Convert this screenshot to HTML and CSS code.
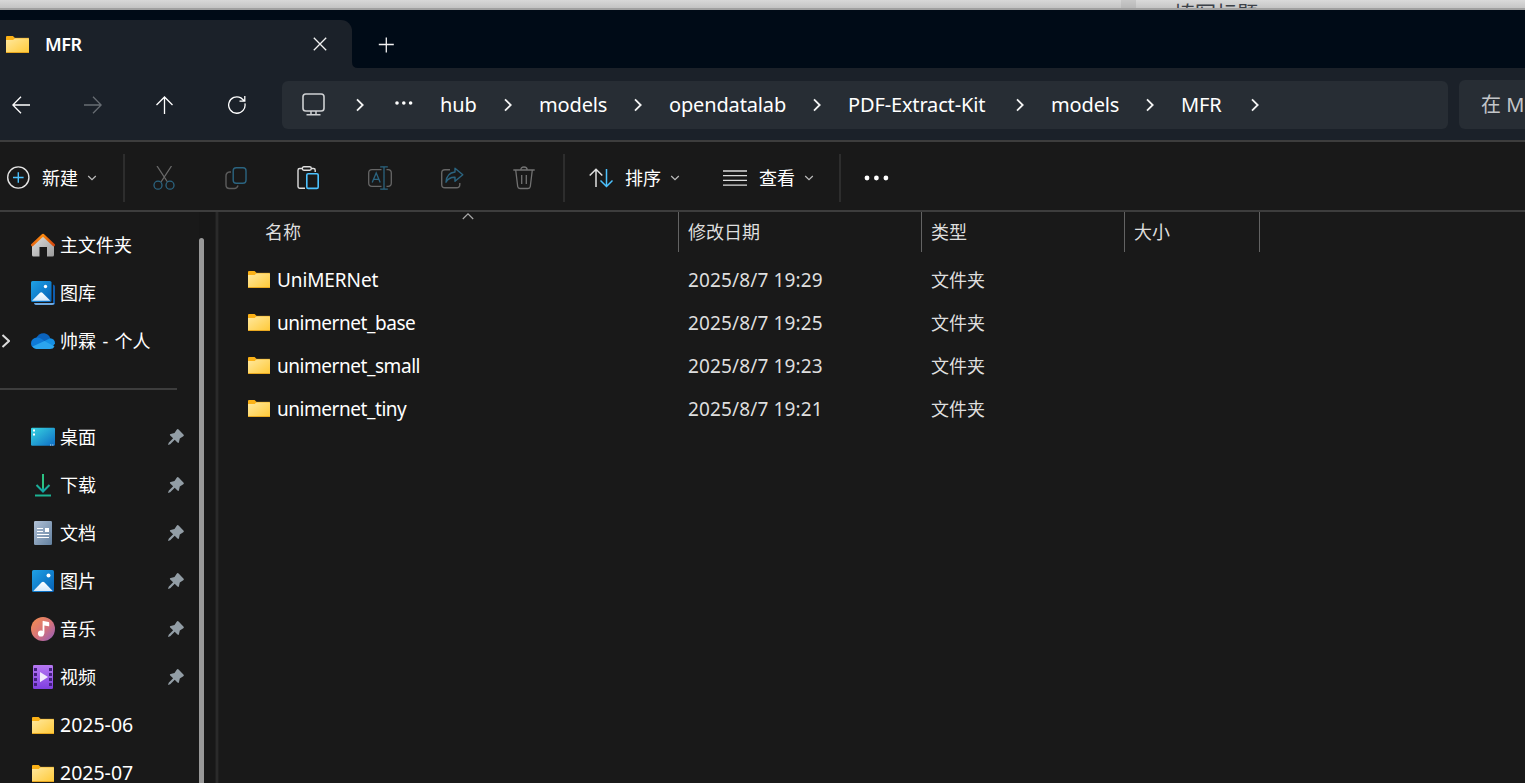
FILE: index.html
```html
<!DOCTYPE html>
<html lang="zh-CN">
<head>
  <meta charset="UTF-8" />
  <meta name="viewport" content="width=device-width, initial-scale=1.0"/>
  <title>MFR</title>
  <link rel="stylesheet" href="styles.css">
</head>
<body>
  <!-- Shared icons -->
  <svg class="sprite" width="0" height="0">
    <defs>
      <linearGradient id="gFolder" x1="0" y1="0" x2="1" y2="1">
        <stop offset="0" stop-color="#ffe9a0"/><stop offset="1" stop-color="#ffc937"/>
      </linearGradient>
      <linearGradient id="gBlue" x1="0" y1="0" x2="1" y2="1">
        <stop offset="0" stop-color="#1fa2e6"/><stop offset="1" stop-color="#0560b6"/>
      </linearGradient>
      <linearGradient id="gSnow" x1="0" y1="0" x2="0" y2="1">
        <stop offset="0" stop-color="#ffffff"/><stop offset="1" stop-color="#d3e9fc"/>
      </linearGradient>
      <linearGradient id="gHome" x1="0" y1="0" x2="1" y2="1">
        <stop offset="0" stop-color="#e0e0e0"/><stop offset="1" stop-color="#9c9c9c"/>
      </linearGradient>
      <linearGradient id="gRoof" x1="0" y1="0" x2="1" y2="0">
        <stop offset="0" stop-color="#e8660f"/><stop offset=".5" stop-color="#f98a10"/><stop offset="1" stop-color="#d3440b"/>
      </linearGradient>
      <linearGradient id="gDesk" x1="0" y1="0" x2="1" y2="1">
        <stop offset="0" stop-color="#38d6e2"/><stop offset="1" stop-color="#0e6cc4"/>
      </linearGradient>
      <linearGradient id="gDown" x1="0" y1="0" x2="0" y2="1">
        <stop offset="0" stop-color="#30c67c"/><stop offset="1" stop-color="#12a5a5"/>
      </linearGradient>
      <linearGradient id="gDoc" x1="0" y1="0" x2="1" y2="1">
        <stop offset="0" stop-color="#b1c1d6"/><stop offset="1" stop-color="#62809f"/>
      </linearGradient>
      <linearGradient id="gMusic" x1="0" y1="0" x2="1" y2="1">
        <stop offset="0" stop-color="#f6904c"/><stop offset=".55" stop-color="#d4727c"/><stop offset="1" stop-color="#8f5bc0"/>
      </linearGradient>
      <linearGradient id="gVideo" x1="0" y1="0" x2="0" y2="1">
        <stop offset="0" stop-color="#b678f2"/><stop offset="1" stop-color="#7f3fe0"/>
      </linearGradient>
      <symbol id="folder" viewBox="0 0 22 17" preserveAspectRatio="none">
        <path d="M0 1a1 1 0 0 1 1-1h5.600l2 2-1 3H0z" fill="#fbb116"/>
        <path d="M0 4h6.800L8.600 2h12.600q.8 0 .8.800V17H0z" fill="url(#gFolder)"/>
        <path d="M8.300 2.300H22" stroke="#f5bd3c" stroke-width=".7"/>
        <path d="M0 16.500h22" stroke="#e9a820" stroke-width="1"/>
      </symbol>
      <symbol id="chev" viewBox="0 0 8 14">
        <path d="M1 1.300L6.700 7 1 12.700" fill="none" stroke="#f4f4f4" stroke-width="1.800"/>
      </symbol>
      <symbol id="down" viewBox="0 0 10 6">
        <path d="M1.200 1L5 4.700 8.800 1" fill="none" stroke="#bdbdbd" stroke-width="1.200"/>
      </symbol>
      <symbol id="pin" viewBox="0 0 16 16">
        <path d="M8.700.7q.9-1.100 1.900-.1l4.800 4.800q1 1-.1 1.800l-3.500 2.200-.8 3.700q-.4 1.500-1.500.4L6.700 10.800 2.200 15.200l-2.200.8.700-2.300L5.100 9.200 2.200 6.400q-.9-1 .5-1.500L6.500 4z" fill="#929da5"/>
      </symbol>
    </defs>
  </svg>

  <div class="window">
    <!-- Page behind the window -->
    <div class="backdrop">
      <div class="backdrop-left"></div>
      <div class="backdrop-gap"></div>
      <div class="backdrop-right">填写标题</div>
    </div>

    <!-- Tabs -->
    <div class="tabs">
      <div class="tab">
        <svg width="23" height="17"><use href="#folder"/></svg>
        <span class="tab-title">MFR</span>
        <svg width="14" height="14" viewBox="0 0 14 14"><path d="M.8.8l12.400 12.400M13.200.8L.8 13.200" stroke="#f2f2f2" stroke-width="1.300"/></svg>
      </div>
      <svg width="6" height="6" viewBox="0 0 6 6"><path d="M0 0q0 6 6 6H0z" fill="#1b2129"/></svg>
      <svg class="tab-new" width="16" height="16" viewBox="0 0 16 16"><path d="M8.300.5v15M.8 7.500h15" stroke="#f2f2f2" stroke-width="1.300"/></svg>
    </div>

    <!-- Navigation and address -->
    <div class="nav">
      <svg width="18" height="18" viewBox="0 0 18 18"><path d="M9 .8L.8 9 9 17.200M.8 9H18" fill="none" stroke="#fff" stroke-width="1.300"/></svg>
      <svg width="18" height="18" viewBox="0 0 18 18"><path d="M9 .8L17.200 9 9 17.200M17.200 9H0" fill="none" stroke="#686d73" stroke-width="1.300"/></svg>
      <svg width="18" height="18" viewBox="0 0 18 18"><path d="M.5 9L8.500 1l8 8M8.500 1v17" fill="none" stroke="#fff" stroke-width="1.300"/></svg>
      <svg width="18" height="18" viewBox="0 0 18 18"><path d="M16.900 7.400A8.200 8.200 0 1 1 12.900 1.900L16.500 5M16.800 0v5.200h-5.300" fill="none" stroke="#fff" stroke-width="1.300"/></svg>
      <div class="address">
        <svg class="pc" width="23" height="23" viewBox="0 0 23 23"><rect x="1" y="1" width="21" height="17" rx="2.800" fill="none" stroke="#cfd1d3" stroke-width="1.600"/><path d="M9 18v3.500M14 18v3.500M4.500 21.800h14" stroke="#cfd1d3" stroke-width="1.500"/></svg>
        <svg class="pc-chev" width="8" height="14"><use href="#chev"/></svg>
        <svg class="dots" width="18" height="4" viewBox="0 0 18 4"><g fill="#fff"><circle cx="2" cy="2" r="1.800"/><circle cx="8.800" cy="2" r="1.800"/><circle cx="15.600" cy="2" r="1.800"/></g></svg>
        <div class="crumb w-hub">hub</div>
        <svg width="8" height="14"><use href="#chev"/></svg>
        <div class="crumb w-models">models</div>
        <svg width="8" height="14"><use href="#chev"/></svg>
        <div class="crumb w-lab">opendatalab</div>
        <svg width="8" height="14"><use href="#chev"/></svg>
        <div class="crumb w-kit">PDF-Extract-Kit</div>
        <svg width="8" height="14"><use href="#chev"/></svg>
        <div class="crumb w-models">models</div>
        <svg width="8" height="14"><use href="#chev"/></svg>
        <div class="crumb w-mfr">MFR</div>
        <svg width="8" height="14"><use href="#chev"/></svg>
      </div>
      <div class="search">在 MFR 中搜索</div>
    </div>

    <!-- Command bar -->
    <div class="commands">
      <div class="command new">
        <svg width="24" height="24" viewBox="0 0 24 24"><circle cx="12.300" cy="11.500" r="10.600" fill="none" stroke="#e4e4e4" stroke-width="1.400"/><path d="M12.300 6.200v10.600M7 11.500h10.600" stroke="#4cc2ff" stroke-width="1.400"/></svg>
        <span>新建</span>
        <svg width="10" height="6"><use href="#down"/></svg>
      </div>
      <div class="sep"></div>
      <div class="tools">
        <!-- cut -->
        <svg width="24" height="24" viewBox="0 0 24 24" fill="none" stroke-width="1.300"><path d="M5 0l10.500 16M19.500 0L9 16" stroke="#696969"/><circle cx="6" cy="19.200" r="4" stroke="#2b6480"/><circle cx="18" cy="19.200" r="4" stroke="#2b6480"/></svg>
        <!-- copy -->
        <svg width="24" height="24" viewBox="0 0 24 24" fill="none" stroke-width="1.400"><path d="M7 6H5.500Q2 6.500 2 10v9q0 3.500 3.500 3.500h5q2.500 0 3.500-3" stroke="#5c5c5c"/><rect x="9.200" y="1.700" width="12.800" height="15.500" rx="3" stroke="#2b6480"/></svg>
        <!-- paste -->
        <svg width="24" height="24" viewBox="0 0 24 24" fill="none" stroke-width="1.400"><path d="M7 2.500H3.700Q2 2.500 2 4.200v16.300Q2 22.200 3.700 22.200H9M15 2.500h2.500q1.700 0 1.700 1.700V6" stroke="#dedede"/><rect x="6.300" y=".8" width="9" height="3.400" rx="1.600" stroke="#dedede"/><rect x="10.800" y="7.700" width="11.400" height="14.700" rx="1.400" stroke="#4cc2ff" stroke-width="1.600"/></svg>
        <!-- rename -->
        <svg width="24" height="24" viewBox="0 0 24 24" fill="none" stroke-width="1.300"><path d="M13.500 3.700H4Q.7 3.700.7 7v10q0 3.300 3.300 3.300h9.500M18.500 3.700H20q3.300 0 3.300 3.300v10q0 3.300-3.300 3.300h-1.500" stroke="#666"/><path d="M4.200 16.500L8.200 7l4 9.500M5.500 13.300h5.400M16 .8v22.400M12.200.8h7.600M12.200 23.200h7.600" stroke="#2b6480"/></svg>
        <!-- share -->
        <svg width="24" height="24" viewBox="0 0 24 24" fill="none" stroke-width="1.400"><path d="M10 3.700H5Q1.700 3.700 1.700 7v11.500q0 3.300 3.300 3.300h11.500q3.300 0 3.300-3.300V17" stroke="#666"/><path d="M15 2.200l7.800 6.600-7.800 6.500v-4Q9 11 6 16.200 6.500 7 15 6z" stroke="#2b6480" stroke-linejoin="round"/></svg>
        <!-- delete -->
        <svg width="24" height="24" viewBox="0 0 24 24" fill="none" stroke="#727272" stroke-width="1.300"><path d="M1.300 4h21.400M8.800 4q0-3 3.200-3t3.200 3M3.700 4l2 16.500q.3 2 2.300 2h8q2 0 2.300-2l2-16.500M9.700 9v9M14.300 9v9"/></svg>
      </div>
      <div class="sep"></div>
      <div class="command sort">
        <svg width="24" height="20" viewBox="0 0 24 20" fill="none" stroke-width="1.500"><path d="M.7 7.500L7 1.200l6.300 6.300M7 1.200V19" stroke="#e0e0e0"/><path d="M17.500 1v17.500M11.500 12.500l6 6 6-6" stroke="#4cc2ff"/></svg>
        <span>排序</span>
        <svg width="10" height="6"><use href="#down"/></svg>
      </div>
      <div class="command view">
        <svg width="24" height="16" viewBox="0 0 24 16"><path d="M0 1h24M0 5.700h24M0 10.400h24M0 15.100h24" stroke="#dcdcdc" stroke-width="1.300"/></svg>
        <span>查看</span>
        <svg width="10" height="6"><use href="#down"/></svg>
      </div>
      <div class="sep"></div>
      <svg class="more" width="25" height="6" viewBox="0 0 25 6"><g fill="#fff"><circle cx="3" cy="3" r="2.400"/><circle cx="12.400" cy="3" r="2.400"/><circle cx="21.900" cy="3" r="2.400"/></g></svg>
    </div>

    <div class="main">
      <!-- Sidebar -->
      <div class="sidebar">
        <div class="places">
          <div class="place">
            <svg width="24" height="24" viewBox="0 0 24 24"><path d="M1 11.500L12 2l11 9.500V22q0 1.500-1.500 1.500H16V14H8.500v9.500h-6Q1 23.500 1 22z" fill="url(#gHome)"/><path d="M1.300 12L12 2l10.700 10" fill="none" stroke="url(#gRoof)" stroke-width="2.600" stroke-linecap="round" stroke-linejoin="round"/></svg>
            <span>主文件夹</span>
          </div>
          <div class="place">
            <svg width="24" height="24" viewBox="0 0 24 24"><path d="M22 3.500q2 .3 2 2V22q0 2-2 2H5q-1.500 0-2-2h19z" fill="#0f5cad"/><path d="M3 22h20.500q-.5 2-2.500 2H5q-1.500 0-2-2z" fill="#6fa9e0"/><rect width="21.500" height="22" rx="2" fill="#191919"/><rect width="20.500" height="21" rx="1.600" fill="url(#gBlue)"/><path d="M1 19.800l8-8q1.200-1.200 2.400 0l8 8z" fill="url(#gSnow)"/><circle cx="14.500" cy="5.500" r="1.700" fill="#fff"/></svg>
            <span>图库</span>
          </div>
          <div class="place">
            <svg class="expand" width="9" height="14" viewBox="0 0 9 14"><path d="M1.500 1L8 7l-6.500 6" fill="none" stroke="#dcdcdc" stroke-width="2"/></svg>
            <svg width="24" height="24" viewBox="0 0 24 24"><path d="M5 9.500Q8 3.500 13.500 4.200 18 5 19.300 9.500L12 15z" fill="#0b63bd"/><path d="M5.500 8.500q3.300-.2 6 2l8 6.500-15 2.500Q0 18.500 0 14.200 .2 9.500 5.500 8.500z" fill="#0f7ad6"/><path d="M13 12.300l6-3Q24 9.500 24 14.500l-3 4z" fill="#1590e4"/><path d="M1.500 17.500L13.500 12l10 5.500q-1.300 2.500-4.500 2.500H5.500q-2.700-.2-4-2.500z" fill="#2ba5ee"/></svg>
            <span>帅霖 - 个人</span>
          </div>
          <div class="line"></div>
          <div class="place">
            <svg width="24" height="24" viewBox="0 0 24 24"><rect y="2.700" width="24" height="18" rx="1.200" fill="url(#gDesk)"/><path d="M2 5.500h2M2 9.500h2" stroke="#fff" stroke-width="2"/><path d="M19 20h1.200M21.200 20h1.200" stroke="#cfe6fa"/></svg>
            <span>桌面</span>
            <svg class="pin" width="16" height="16"><use href="#pin"/></svg>
          </div>
          <div class="place">
            <svg width="24" height="24" viewBox="0 0 24 24"><path d="M12 1v17M5.500 12l6.500 6.500 6.500-6.500" fill="none" stroke="url(#gDown)" stroke-width="2"/><path d="M11 1h2v14h-2z" fill="#2cc384"/><path d="M4 21.500h16v2H4z" fill="#1cb393"/></svg>
            <span>下载</span>
            <svg class="pin" width="16" height="16"><use href="#pin"/></svg>
          </div>
          <div class="place">
            <svg width="24" height="24" viewBox="0 0 24 24"><rect x="3" width="18" height="24" rx="1.300" fill="url(#gDoc)"/><path d="M6 7.500h6M6 10.500h6M6 13.500h12M6 16.500h12" stroke="#fff" stroke-width="1.100"/><path d="M14 7h4v4h-4z" fill="#fff"/></svg>
            <span>文档</span>
            <svg class="pin" width="16" height="16"><use href="#pin"/></svg>
          </div>
          <div class="place">
            <svg width="24" height="24" viewBox="0 0 24 24"><rect x="1" y="1" width="22" height="22" rx="1.600" fill="url(#gBlue)"/><path d="M2.300 22l8.400-8.700q1.300-1.300 2.600 0l8.400 8.700z" fill="url(#gSnow)"/><circle cx="17.500" cy="6.500" r="2" fill="#fff"/></svg>
            <span>图片</span>
            <svg class="pin" width="16" height="16"><use href="#pin"/></svg>
          </div>
          <div class="place">
            <svg width="24" height="24" viewBox="0 0 24 24"><circle cx="12" cy="12" r="12" fill="url(#gMusic)"/><circle cx="10" cy="16.500" r="3.100" fill="#fff"/><path d="M11.600 4.500q0-.8.900-.6l5 1q.7.2.7.8v3q0 .7-.7.600l-4.100-.8v8h-1.800z" fill="#fff"/></svg>
            <span>音乐</span>
            <svg class="pin" width="16" height="16"><use href="#pin"/></svg>
          </div>
          <div class="place">
            <svg width="24" height="24" viewBox="0 0 24 24"><rect x="2" width="20" height="24" rx="1.300" fill="url(#gVideo)"/><path d="M4.500 3v20M19.500 3v20" stroke="#43207e" stroke-width="3" stroke-dasharray="3 2"/><path d="M9 7l8 5-8 5.300z" fill="#f2eafc"/></svg>
            <span>视频</span>
            <svg class="pin" width="16" height="16"><use href="#pin"/></svg>
          </div>
          <div class="place dir">
            <svg width="22" height="17"><use href="#folder"/></svg>
            <span class="num">2025-06</span>
          </div>
          <div class="place dir">
            <svg width="22" height="17"><use href="#folder"/></svg>
            <span class="num">2025-07</span>
          </div>
        </div>
        <div class="scroll"><div class="thumb"></div></div>
      </div>
      <div class="splitter"></div>

      <!-- File list -->
      <div class="files">
        <div class="row head">
          <div class="name">名称
            <svg class="sorted" width="12" height="7" viewBox="0 0 12 7"><path d="M.8 6L6 .9 11.200 6" fill="none" stroke="#a9a9a9" stroke-width="1.200"/></svg>
          </div>
          <div class="date">修改日期</div>
          <div class="type">类型</div>
          <div class="size">大小</div>
        </div>
        <div class="row">
          <div class="name wide"><svg width="22" height="17"><use href="#folder"/></svg><span>UniMERNet</span></div>
          <div class="date">2025/8/7 19:29</div>
          <div class="type">文件夹</div>
        </div>
        <div class="row">
          <div class="name"><svg width="22" height="17"><use href="#folder"/></svg><span>unimernet_base</span></div>
          <div class="date">2025/8/7 19:25</div>
          <div class="type">文件夹</div>
        </div>
        <div class="row">
          <div class="name"><svg width="22" height="17"><use href="#folder"/></svg><span>unimernet_small</span></div>
          <div class="date">2025/8/7 19:23</div>
          <div class="type">文件夹</div>
        </div>
        <div class="row">
          <div class="name"><svg width="22" height="17"><use href="#folder"/></svg><span>unimernet_tiny</span></div>
          <div class="date">2025/8/7 19:21</div>
          <div class="type">文件夹</div>
        </div>
      </div>
    </div>
  </div>
</body>
</html>
```
FILE: styles.css
```css
* { box-sizing: border-box; margin: 0; padding: 0; }
body {
  height: 100vh;
  overflow: hidden;
  font-family: "Noto Sans", "Noto Sans CJK SC", sans-serif;
  font-size: 18px;
  background: #191919;
  color: #fff;
}

svg { display: block; flex: none; }
.sprite { position: absolute; }

.window {
  height: 100vh;
  display: flex;
  flex-direction: column;
  overflow: hidden;
}

/* strip of the page behind */
.backdrop {
  flex: none;
  height: 10px;
  display: flex;
  overflow: hidden;
  border-bottom: 2px solid #a0a0a0;
}
.backdrop-left { width: 1121px; background: linear-gradient(#d8d8d8, #c4c4c4); }
.backdrop-gap { width: 15px; background: linear-gradient(#c8c8c8, #b8b8b8); }
.backdrop-right {
  flex: 1;
  padding: 1px 0 0 38px;
  background: linear-gradient(#dadada, #c6c6c6);
  color: #3c4148;
  font-family: "Noto Sans CJK SC", sans-serif;
  font-size: 21px;
  line-height: 22px;
}

.tabs {
  flex: none;
  height: 58px;
  display: flex;
  align-items: flex-end;
  background: #000b17;
}
.tab {
  width: 352px;
  height: 48px;
  display: flex;
  align-items: center;
  padding: 0 25px 0 6px;
  background: #1b2129;
  border-radius: 0 11px 0 0;
}
.tab-title {
  flex: 1;
  margin-left: 16px;
  font-size: 18px;
  font-weight: 600;
  letter-spacing: -0.5px;
}
.tab-new { margin: 0 0 15px 20px; }

.nav {
  flex: none;
  height: 74px;
  display: flex;
  align-items: center;
  gap: 54px;
  padding: 1px 0 0 12px;
  background: #1b2129;
  border-bottom: 2px solid #3d3d3d;
}
.address {
  width: 1166px;
  height: 48px;
  flex: none;
  margin-left: -18px;
  display: flex;
  align-items: center;
  padding-left: 20px;
  background: #272d34;
  border-radius: 6px;
  font-size: 20px;
  letter-spacing: -0.15px;
}
.pc-chev { margin: 0 31px; }
.dots { margin: 0 27px 3px 0; }
.crumb { margin-right: 27.5px; white-space: nowrap; }
.crumb + svg { margin-right: 27.5px; }
.w-hub { width: 36px; }
.w-models { width: 67px; }
.w-lab { width: 116px; }
.w-kit { width: 140px; }
.w-mfr { width: 42px; }
.search {
  width: 300px;
  height: 49px;
  flex: none;
  margin-left: -43px;
  padding-left: 22px;
  line-height: 49px;
  background: #272d34;
  border-radius: 6px;
  color: #c3c6c9;
  font-size: 20px;
  white-space: nowrap;
  overflow: hidden;
}

.commands {
  flex: none;
  height: 70px;
  display: flex;
  align-items: center;
  padding: 4px 0 0 6px;
  border-bottom: 2px solid #3d3d3d;
}
.command {
  display: flex;
  align-items: center;
}
.command span {
  width: 36px;
  margin: 0 9px 2px 12px;
  white-space: nowrap;
}
.new { width: 117px; }
.sep { width: 2px; height: 48px; background: #2d2d2d; }
.tools {
  display: flex;
  gap: 48px;
  margin: 0 27px;
}
.sort { margin-left: 24px; width: 134px; }
.view { width: 116px; }
.more { margin-left: 23px; }

.main {
  flex: 1;
  min-height: 0;
  display: flex;
}
.sidebar {
  width: 215px;
  display: flex;
  overflow: hidden;
}
.places {
  width: 199px;
  flex: none;
  padding-top: 9px;
}
.place {
  position: relative;
  height: 48px;
  display: flex;
  align-items: center;
  padding: 0 15px 0 31px;
}
.place span {
  flex: 1;
  margin: 0 0 2px 5px;
  white-space: nowrap;
  word-spacing: 1.7px;
}
.dir { padding-left: 32px; }
.place .num { margin-left: 6px; font-size: 19.5px; }
.expand {
  position: absolute;
  left: 1px;
  top: 17px;
}
.line {
  width: 177px;
  height: 2px;
  margin: 23px 0;
  background: #3d3d3d;
}
.scroll { flex: none; width: 16px; padding-top: 26px; background: #171717; }
.thumb {
  width: 5px;
  height: 600px;
  border-radius: 3px;
  background: #989898;
}
.splitter {
  width: 4px;
  background: #2a2a2a;
  border-left: 1px solid #1f1f1f;
  border-right: 1px solid #1f1f1f;
}

.files { flex: 1; }
.row {
  height: 43px;
  display: flex;
  align-items: center;
  padding-left: 29px;
  color: #dedede;
}
.row .name {
  width: 431px;
  display: flex;
  align-items: center;
  gap: 7px;
  color: #fff;
  font-size: 19px;
  letter-spacing: -0.45px;
}
.row .name.wide { letter-spacing: -0.1px; }
.row .date {
  width: 243px;
  padding-left: 9px;
  font-size: 19px;
  letter-spacing: 0.14px;
}
.row .type {
  width: 203px;
  padding: 0 0 2px 9px;
  font-size: 18px;
}
.row .size { width: 135px; padding-left: 9px; }

.head { height: 40px; margin-bottom: 6px; }
.head > div {
  height: 40px;
  line-height: 41px;
  border-right: 1px solid #636363;
}
.row.head .name {
  position: relative;
  padding-left: 17px;
  font-size: 18px;
  letter-spacing: 0;
  color: #dedede;
}
.row.head .date { font-size: 18px; letter-spacing: 0; }
.sorted { position: absolute; left: 214px; top: 1px; }
```
